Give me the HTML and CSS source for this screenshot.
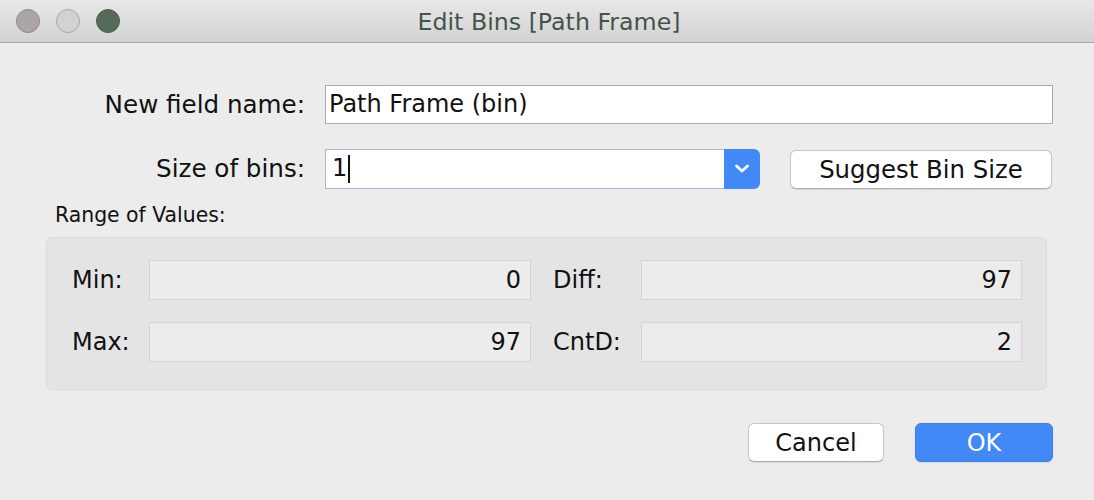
FILE: index.html
```html
<!DOCTYPE html>
<html>
<head>
<meta charset="utf-8">
<link rel="stylesheet" href="styles.css">
</head>
<body>
<div class="window">
  <header class="titlebar">
    <div class="lights">
      <span class="light l-close"></span>
      <span class="light l-min"></span>
      <span class="light l-max"></span>
    </div>
    <div class="title">Edit Bins [Path Frame]</div>
  </header>
  <main class="content">
    <div class="row row-name">
      <label class="lbl">New field name:</label>
      <div class="input name-input">Path Frame (bin)</div>
    </div>
    <div class="row row-size">
      <label class="lbl">Size of bins:</label>
      <div class="combo">
        <div class="combo-text">1<span class="caret"></span></div>
        <div class="combo-btn">
          <svg width="16" height="11" viewBox="0 0 16 11"><path d="M2.5 3 L8 8 L13.5 3" fill="none" stroke="#fff" stroke-width="2.8" stroke-linecap="round" stroke-linejoin="round"/></svg>
        </div>
      </div>
      <button class="btn suggest">Suggest Bin Size</button>
    </div>
    <div class="range-title">Range of Values:</div>
    <section class="panel">
      <div class="prow">
        <span class="plbl plbl-l">Min:</span>
        <div class="field field-l">0</div>
        <span class="plbl plbl-r">Diff:</span>
        <div class="field field-r">97</div>
      </div>
      <div class="prow">
        <span class="plbl plbl-l">Max:</span>
        <div class="field field-l">97</div>
        <span class="plbl plbl-r">CntD:</span>
        <div class="field field-r">2</div>
      </div>
    </section>
    <div class="actions">
      <button class="btn cancel">Cancel</button>
      <button class="btn ok">OK</button>
    </div>
  </main>
</div>
</body>
</html>
```
FILE: styles.css
```css
* { box-sizing: border-box; }
html, body {
  margin: 0;
  padding: 0;
  width: 1094px;
  height: 500px;
  overflow: hidden;
  background: #ececec;
  font-family: "DejaVu Sans", "Liberation Sans", sans-serif;
  color: #111;
}
.window {
  width: 1094px;
  height: 500px;
  background: #ececec;
}
.titlebar {
  position: relative;
  height: 43px;
  background: linear-gradient(#e8e8e8, #d3d3d3);
  border-bottom: 1px solid #a8a5a8;
  display: flex;
  align-items: center;
  justify-content: center;
}
.lights {
  position: absolute;
  left: 16px;
  top: 9px;
  display: flex;
  gap: 16px;
}
.light {
  width: 24px;
  height: 24px;
  border-radius: 50%;
  display: block;
}
.l-close { background: #aba5aa; border: 1px solid #8e898d; }
.l-min { background: #d2d1d4; border: 1px solid #a9a8ab; }
.l-max { background: #566b57; border: 1px solid #4c5f4d; }
.title {
  font-size: 23.7px;
  color: #45544a;
  margin-top: 1px;
  margin-left: 4px;
}
.content {
  padding: 42px 0 0 0;
}
.row {
  display: flex;
  align-items: center;
}
.lbl {
  width: 305px;
  text-align: right;
  font-size: 24.6px;
}
.input {
  margin-left: 20px;
  height: 39px;
  background: #fff;
  border: 1px solid #a9a9ab;
  font-size: 24px;
  line-height: 37px;
  padding-left: 3px;
}
.name-input { width: 728px; }
.row-size { margin-top: 24px; }
.combo {
  margin-left: 20px;
  width: 435px;
  height: 40px;
  display: flex;
}
.combo-text {
  flex: 1;
  background: #fff;
  border: 1px solid #a9b8d2;
  border-right: none;
  font-size: 24px;
  line-height: 37px;
  padding-left: 6px;
  display: flex;
  align-items: center;
}
.caret {
  display: inline-block;
  width: 2px;
  height: 28px;
  background: #111;
  margin-left: 1px;
}
.combo-btn {
  width: 36px;
  background: #4189f6;
  border-radius: 0 6px 6px 0;
  display: flex;
  align-items: center;
  justify-content: center;
}
.btn {
  font-family: inherit;
  font-size: 24px;
  color: #111;
  background: #fff;
  border: 1px solid #c6c6c8;
  border-bottom-color: #adadb0;
  border-radius: 6px;
  height: 39px;
  padding: 0;
  box-shadow: 0 0.5px 1px rgba(0,0,0,0.08);
}
.suggest {
  margin-left: 30px;
  width: 262px;
  margin-top: 2px;
  font-size: 24.4px;
}
.range-title {
  font-size: 20.4px;
  line-height: 24px;
  margin: 14px 0 10px 55px;
}
.panel {
  margin-left: 46px;
  width: 1001px;
  height: 153px;
  background: #e4e4e4;
  border: 1px solid #dadada;
  border-radius: 6px;
  padding: 22px 0 0 25px;
  display: flex;
  flex-direction: column;
  gap: 22px;
}
.prow {
  display: flex;
  align-items: center;
  height: 40px;
}
.plbl {
  font-size: 24px;
}
.plbl-l { width: 77px; }
.plbl-r { width: 88px; margin-left: 22px; }
.field {
  height: 40px;
  background: #ececec;
  border: 1px solid #d4d4d4;
  font-size: 24px;
  line-height: 38px;
  text-align: right;
  padding-right: 9px;
}
.field-l { width: 382px; }
.field-r { width: 381px; }
.actions {
  display: flex;
  justify-content: flex-end;
  gap: 31px;
  margin-top: 33px;
  padding-right: 41px;
}
.cancel { width: 136px; }
.ok {
  width: 138px;
  background: #4189f6;
  border-color: #3b80ec;
  color: #fff;
}
```
